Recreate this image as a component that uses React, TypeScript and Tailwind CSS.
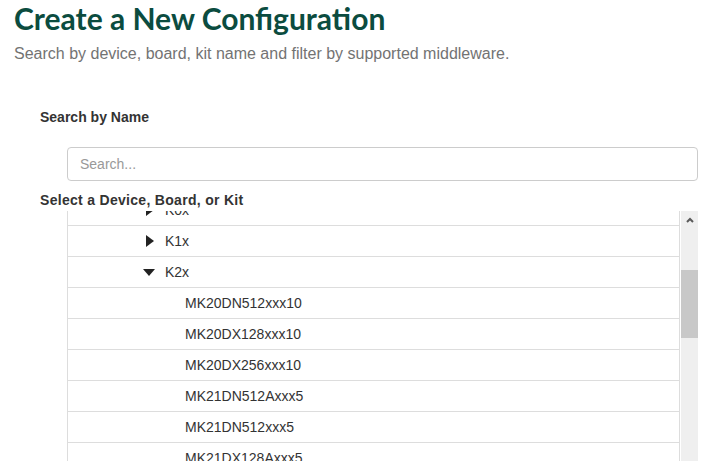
import React from "react";

type Row = { label: string; level: 1 | 2; state?: "closed" | "open" };

const rows: Row[] = [
  { label: "K0x", level: 1, state: "closed" },
  { label: "K1x", level: 1, state: "closed" },
  { label: "K2x", level: 1, state: "open" },
  { label: "MK20DN512xxx10", level: 2 },
  { label: "MK20DX128xxx10", level: 2 },
  { label: "MK20DX256xxx10", level: 2 },
  { label: "MK21DN512Axxx5", level: 2 },
  { label: "MK21DN512xxx5", level: 2 },
  { label: "MK21DX128Axxx5", level: 2 },
  { label: "MK21DX256xxx5", level: 2 },
];

function TriRight() {
  return (
    <svg width="8" height="12" viewBox="0 0 8 12" className="block">
      <polygon points="0,0 8,6 0,12" fill="#222" />
    </svg>
  );
}

function TriDown() {
  return (
    <svg width="12" height="7" viewBox="0 0 12 7" className="block">
      <polygon points="0,0 12,0 6,7" fill="#222" />
    </svg>
  );
}

export default function App() {
  return (
    <div className="w-[724px] h-[461px] overflow-hidden bg-white font-['Liberation_Sans',Arial,sans-serif]">
      <div className="pl-[14px]">
        <h1 className="font-['Lato',sans-serif] font-bold text-[30px] leading-[36px] text-[#0b4c3f]">
          Create a New Configuration
        </h1>
        <p className="mt-[6px] text-[16px] leading-[24px] text-[#737373]">
          Search by device, board, kit name and filter by supported middleware.
        </p>
      </div>

      <div className="pl-[40px] mt-[41px] text-[14px] leading-[20px] font-bold text-[#333]">
        Search by Name
      </div>

      <div className="ml-[67px] mt-[20px] w-[631px] h-[34px] border border-[#ccc] rounded-[4px] flex items-center px-[12px]">
        <span className="text-[14px] text-[#999]">Search...</span>
      </div>

      <div className="pl-[40px] mt-[9px] text-[14px] leading-[20px] font-bold tracking-[0.3px] text-[#333] relative z-10">
        Select a Device, Board, or Kit
      </div>

      <div className="ml-[67px] mt-[1px] w-[631px] h-[260px] flex border-l border-[#ddd]">
        <div className="flex-1 border-r border-[#ddd] overflow-hidden">
          <div className="-mt-[16px]">
            {rows.map((r) => (
              <div
                key={r.label}
                className="h-[31px] border-b border-[#ddd] flex items-center text-[14px] text-[#333]"
              >
                {r.level === 1 ? (
                  <>
                    <div className="w-[97px] pl-[75px] flex items-center">
                      {r.state === "open" ? (
                        <TriDown />
                      ) : (
                        <div className="pl-[3px]">
                          <TriRight />
                        </div>
                      )}
                    </div>
                    <span>{r.label}</span>
                  </>
                ) : (
                  <span className="pl-[117px]">{r.label}</span>
                )}
              </div>
            ))}
          </div>
        </div>
        <div className="w-[1px]" />
        <div className="w-[17px] bg-[#efefef] flex flex-col">
          <div className="h-[17px] flex items-center justify-center">
            <svg width="8" height="6" viewBox="0 0 8 6" className="block">
              <polyline points="1,5 4,2 7,5" fill="none" stroke="#5a5a5a" strokeWidth="2" />
            </svg>
          </div>
          <div className="mt-[42px] h-[68px] bg-[#c8c8c8]" />
        </div>
      </div>
    </div>
  );
}
